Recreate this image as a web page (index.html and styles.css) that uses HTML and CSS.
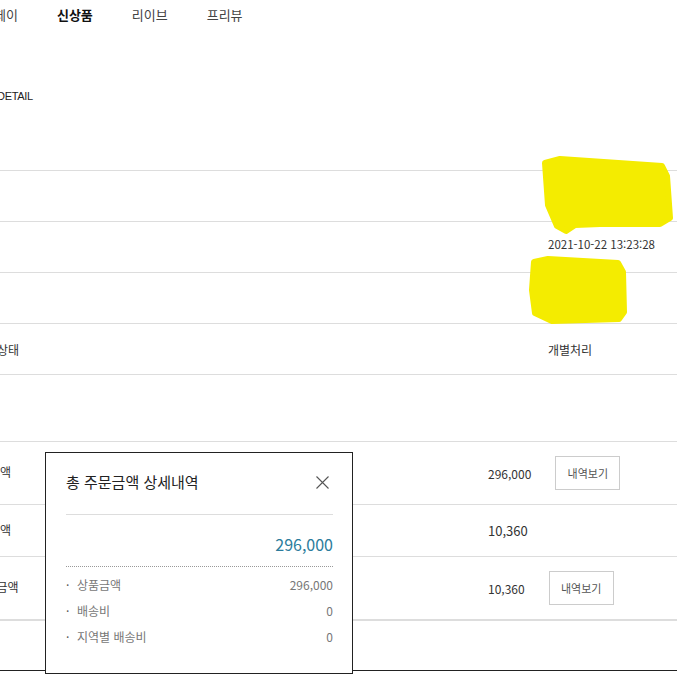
FILE: index.html
```html
<!DOCTYPE html>
<html lang="ko">
<head>
<meta charset="utf-8">
<title>주문 상세</title>
<link rel="stylesheet" href="styles.css">
</head>
<body>
<div class="page">
  <nav class="gnb">
    <a class="gnb-item">페이</a>
    <a class="gnb-item is-active">신상품</a>
    <a class="gnb-item">리이브</a>
    <a class="gnb-item">프리뷰</a>
  </nav>

  <h2 class="page-title">DETAIL</h2>

  <div class="content">
    <div class="info">
      <div class="info-row"><span class="info-label"></span><span class="info-value"></span></div>
      <div class="info-row"><span class="info-label"></span><span class="info-value"></span></div>
      <div class="info-row"><span class="info-label"></span><span class="info-value date">2021-10-22 13:23:28</span></div>
      <div class="info-row"><span class="info-label"></span><span class="info-value"></span></div>
      <div class="info-row"><span class="info-label">주문상태</span><span class="info-value">개별처리</span></div>
    </div>

    <div class="sum">
      <div class="sum-row tall">
        <span class="sum-label">상품금액</span>
        <span class="sum-value">296,000</span>
        <button class="btn-detail">내역보기</button>
      </div>
      <div class="sum-row">
        <span class="sum-label">할인금액</span>
        <span class="sum-value big">10,360</span>
      </div>
      <div class="sum-row tall last">
        <span class="sum-label wide">결제 금액</span>
        <span class="sum-value">10,360</span>
        <button class="btn-detail">내역보기</button>
      </div>
    </div>
    <div class="bottom-space"></div>
  </div>

  <svg class="scribble" width="152" height="180" viewBox="525 150 152 180" aria-hidden="true">
    <path d="M545 163 L560 159 L662 166 L667 176 L670 218 L660 224 L600 224 L575 225 L566 231 L557 226 L548 205 Z" fill="#f4ec00" stroke="#f4ec00" stroke-width="6" stroke-linejoin="round"/>
    <path d="M534 262 L548 259 L618 263 L623 272 L624 312 L619 319 L552 321 L535 313 L532 290 Z" fill="#f4ec00" stroke="#f4ec00" stroke-width="6" stroke-linejoin="round"/>
  </svg>

  <div class="modal">
    <div class="modal-head">
      <h3 class="modal-title">총 주문금액 상세내역</h3>
      <svg class="modal-close" width="13" height="13" viewBox="0 0 13 13" aria-label="닫기">
        <path d="M0.5 0.5 L12.5 12.5 M12.5 0.5 L0.5 12.5" stroke="#555" stroke-width="1.1" fill="none"/>
      </svg>
    </div>
    <div class="modal-total">296,000</div>
    <ul class="modal-list">
      <li><span class="item-name">상품금액</span><span class="item-val">296,000</span></li>
      <li><span class="item-name">배송비</span><span class="item-val">0</span></li>
      <li><span class="item-name">지역별 배송비</span><span class="item-val">0</span></li>
    </ul>
  </div>
</div>
</body>
</html>
```

FILE: styles.css
```css
* { box-sizing: border-box; }

html, body {
  margin: 0;
  padding: 0;
  background: #fff;
}

body {
  width: 677px;
  height: 677px;
  overflow: hidden;
  font-family: "Noto Sans CJK KR", "Noto Sans", sans-serif;
  color: #333;
}

.page {
  position: relative;
  width: 677px;
  height: 677px;
}

.gnb {
  display: flex;
  gap: 39px;
  height: 30px;
  margin-left: -6px;
  align-items: center;
}

.gnb-item {
  font-size: 13px;
  line-height: 30px;
  color: #444;
}

.gnb-item.is-active {
  font-weight: 600;
  color: #111;
}

.page-title {
  margin: 58px 0 0 -3px;
  font-family: "Liberation Sans", sans-serif;
  font-weight: normal;
  font-size: 11px;
  line-height: 16px;
  height: 16px;
  color: #222;
  letter-spacing: -0.3px;
}

.content {
  margin-top: 16px;
  margin-left: -33px;
  width: 710px;
}

.info-row {
  display: grid;
  grid-template-columns: 581px 1fr;
  align-items: center;
  height: 51px;
  border-bottom: 1px solid #ddd;
  font-size: 12px;
  color: #333;
}

.info-label { padding-left: 8px; }

.info-value.date {
  font-size: 11.5px;
  margin-top: -6px;
  color: #333;
}

.sum {
  margin-top: 66px;
  border-top: 1px solid #ddd;
}

.sum-row {
  display: grid;
  grid-template-columns: 521px auto 1fr;
  align-items: center;
  column-gap: 24px;
  height: 52px;
  border-bottom: 1px solid #ddd;
  font-size: 12px;
}

.sum-row .sum-value { margin-left: -24px; }

.sum-row.tall { height: 63px; }

.sum-row.last {
  height: 64px;
  border-bottom: 2px solid #ddd;
}

.sum-label {
  color: #333;
  margin-top: -3px;
}

.sum-label.wide { word-spacing: 4px; }

.sum-value {
  color: #333;
  font-size: 12px;
}

.sum-value.big { font-size: 13px; }

.btn-detail {
  justify-self: start;
  width: 65px;
  height: 34px;
  border: 1px solid #ccc;
  background: #fff;
  font-family: "Noto Sans CJK KR", sans-serif;
  font-size: 11px;
  color: #555;
  padding: 0;
}

.bottom-space {
  height: 50px;
  border-bottom: 1px solid #222;
}

.scribble {
  position: absolute;
  left: 525px;
  top: 150px;
  filter: blur(0.6px);
}

.modal {
  position: absolute;
  left: 45px;
  top: 452px;
  width: 308px;
  height: 222px;
  border: 1px solid #222;
  background: #fff;
  padding: 0 19px 0 20px;
}

.modal-head {
  display: flex;
  justify-content: space-between;
  align-items: center;
  padding: 20px 0 23px;
  border-bottom: 1px solid #ddd;
}

.modal-title {
  margin: 0;
  font-size: 15px;
  font-weight: normal;
  line-height: 18px;
  color: #222;
}

.modal-close { margin-right: 4px; }

.modal-total {
  text-align: right;
  font-size: 16px;
  line-height: 20px;
  padding: 19px 0 12px;
  color: #2b7c9c;
  border-bottom: 1px dotted #999;
}

.modal-list {
  list-style: none;
  margin: 0;
  padding: 5px 0 0;
}

.modal-list li {
  display: flex;
  justify-content: space-between;
  line-height: 26px;
  font-size: 12px;
  color: #777;
}

.item-name::before {
  content: "·";
  display: inline-block;
  width: 11px;
  color: #555;
}

.item-val { color: #777; }
```
